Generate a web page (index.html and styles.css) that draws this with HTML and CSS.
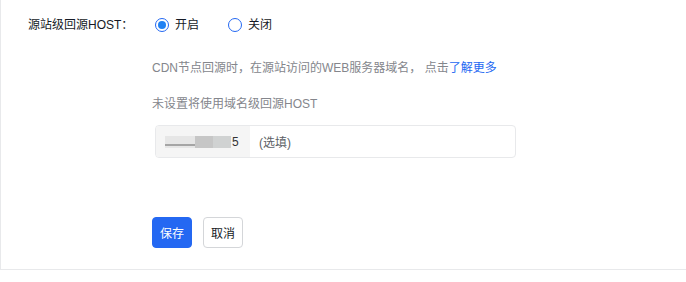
FILE: index.html
```html
<!DOCTYPE html>
<html lang="zh-CN">
<head>
<meta charset="utf-8">
<title>源站级回源HOST</title>
<link rel="stylesheet" href="styles.css">
</head>
<body>
<div class="panel">
  <div class="field">
    <div class="label">源站级回源HOST：</div>
    <div class="control">
      <div class="radios">
        <label class="radio checked"><span class="dot"></span><span class="radio-text">开启</span></label>
        <label class="radio"><span class="dot"></span><span class="radio-text">关闭</span></label>
      </div>
      <p class="help help-first">CDN节点回源时，在源站访问的WEB服务器域名， 点击<a class="link" href="#">了解更多</a></p>
      <p class="help help-second">未设置将使用域名级回源HOST</p>
      <div class="input">
        <div class="prefix">
          <span class="mosaic m1"></span><span class="mosaic m2"></span><span class="mosaic m3"></span><span class="tail">5</span>
        </div>
        <span class="placeholder">(选填)</span>
      </div>
    </div>
  </div>
  <div class="actions">
    <button class="btn btn-primary">保存</button>
    <button class="btn">取消</button>
  </div>
</div>
</body>
</html>
```

FILE: styles.css
```css
* { box-sizing: border-box; }
html, body { margin: 0; padding: 0; background: #fff; }
body {
  font-family: "Liberation Sans", "Noto Sans CJK SC", sans-serif;
  font-size: 12px;
  color: #151a26;
}
.panel {
  width: 686px;
  height: 270px;
  border-left: 1px solid #e8e9eb;
  border-bottom: 1px solid #e8e9eb;
  padding: 15px 0 0 27px;
}
.field { display: flex; }
.label {
  width: 124px;
  height: 20px;
  line-height: 20px;
  flex: none;
}
.control { display: flex; flex-direction: column; align-items: flex-start; }
.radios { display: flex; height: 20px; align-items: center; padding-left: 3px; }
.radio { display: flex; align-items: center; margin-right: 29px; cursor: pointer; }
.dot {
  width: 14px; height: 14px;
  border: 1px solid #2468f2;
  border-radius: 50%;
  display: flex; align-items: center; justify-content: center;
  margin-right: 6px;
}
.radio.checked .dot::after {
  content: "";
  width: 8px; height: 8px;
  border-radius: 50%;
  background: #2181f3;
}
.radio-text { line-height: 20px; }
.help {
  margin: 0;
  line-height: 20px;
  color: #84868c;
}
.help-first { margin-top: 23px; }
.help-second { margin-top: 16px; }
.link { color: #2468f2; text-decoration: none; }
.input {
  margin: 11px 0 0 3px;
  width: 361px;
  height: 33px;
  border: 1px solid #e8e9eb;
  border-radius: 4px;
  display: flex;
  align-items: center;
  overflow: hidden;
}
.prefix {
  width: 94px;
  height: 100%;
  background: #f5f5f5;
  display: flex;
  align-items: center;
  padding-left: 9px;
}
.mosaic { display: block; height: 12px; }
.m1 { width: 30px; background: linear-gradient(#e6e6e6 0 70%, #a5a5a5 70% 80%, #e6e6e6 80%); }
.m2 { width: 18px; background: #c6c6c6; }
.m3 { width: 18px; background: #d0d2d2; }
.tail { margin-left: 1px; color: #333; line-height: 20px; }
.placeholder { margin-left: 9px; color: #5c5f66; }
.actions {
  display: flex;
  gap: 11px;
  margin-top: 59px;
  padding-left: 124px;
}
.btn {
  width: 40px;
  height: 31px;
  padding: 0;
  border: 1px solid #d4d6d9;
  border-radius: 4px;
  background: #fff;
  color: #151a26;
  font-family: inherit;
  font-size: 12px;
  cursor: pointer;
}
.btn-primary {
  background: #2468f2;
  border-color: #2468f2;
  color: #fff;
}
```
